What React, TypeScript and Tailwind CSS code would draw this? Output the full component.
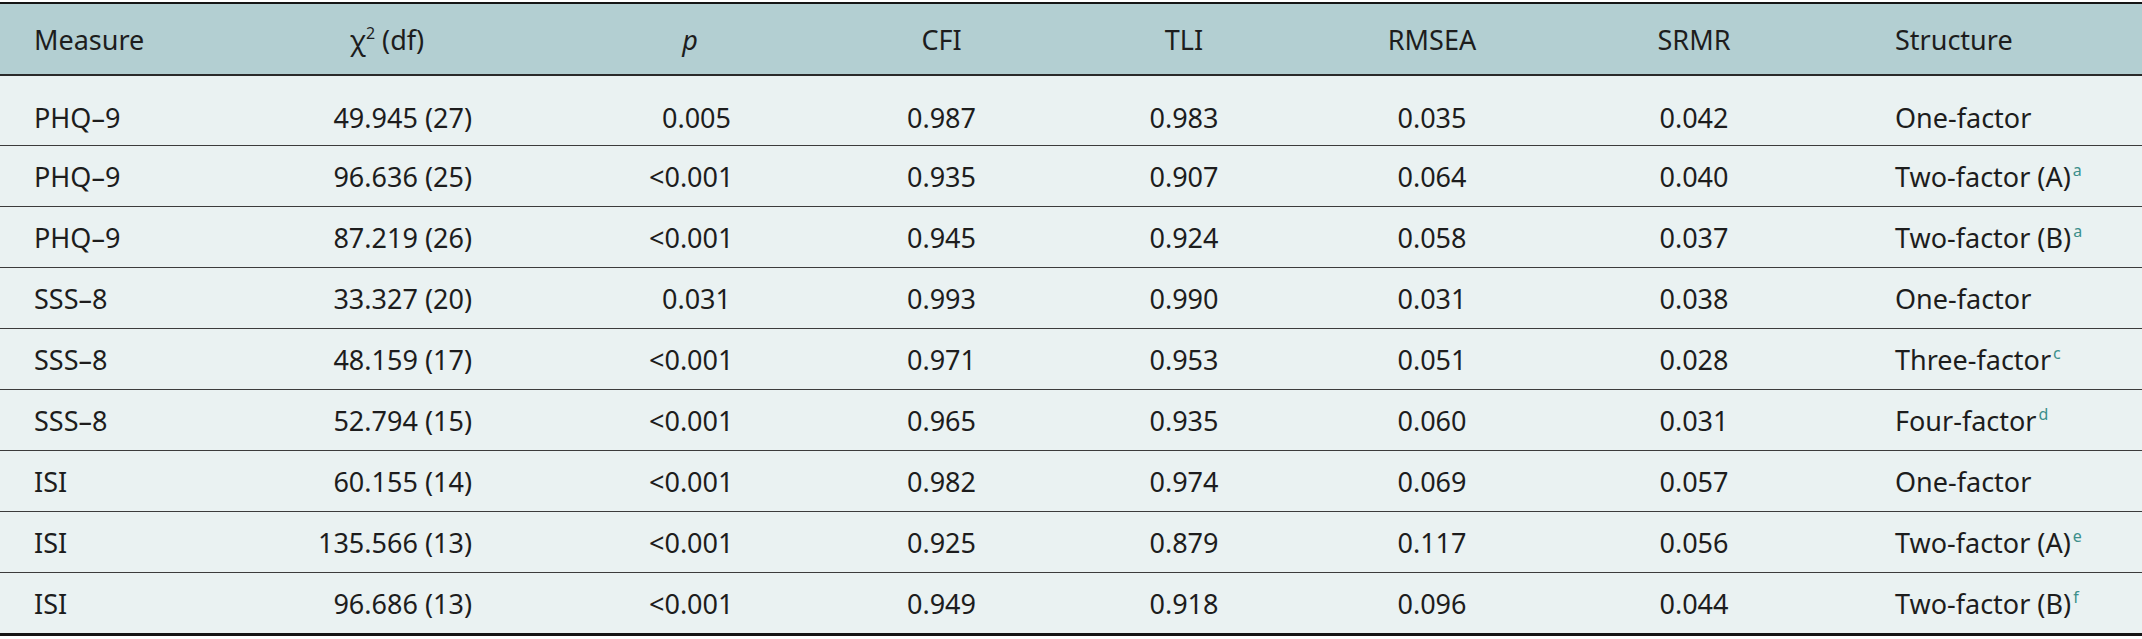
import React from "react"

type Row = {
  measure: string
  chi: string
  p: string
  cfi: string
  tli: string
  rmsea: string
  srmr: string
  structure: string
  note?: string
}

const rows: Row[] = [
  { measure: "PHQ–9", chi: "49.945 (27)", p: "0.005", cfi: "0.987", tli: "0.983", rmsea: "0.035", srmr: "0.042", structure: "One-factor" },
  { measure: "PHQ–9", chi: "96.636 (25)", p: "<0.001", cfi: "0.935", tli: "0.907", rmsea: "0.064", srmr: "0.040", structure: "Two-factor (A)", note: "a" },
  { measure: "PHQ–9", chi: "87.219 (26)", p: "<0.001", cfi: "0.945", tli: "0.924", rmsea: "0.058", srmr: "0.037", structure: "Two-factor (B)", note: "a" },
  { measure: "SSS–8", chi: "33.327 (20)", p: "0.031", cfi: "0.993", tli: "0.990", rmsea: "0.031", srmr: "0.038", structure: "One-factor" },
  { measure: "SSS–8", chi: "48.159 (17)", p: "<0.001", cfi: "0.971", tli: "0.953", rmsea: "0.051", srmr: "0.028", structure: "Three-factor", note: "c" },
  { measure: "SSS–8", chi: "52.794 (15)", p: "<0.001", cfi: "0.965", tli: "0.935", rmsea: "0.060", srmr: "0.031", structure: "Four-factor", note: "d" },
  { measure: "ISI", chi: "60.155 (14)", p: "<0.001", cfi: "0.982", tli: "0.974", rmsea: "0.069", srmr: "0.057", structure: "One-factor" },
  { measure: "ISI", chi: "135.566 (13)", p: "<0.001", cfi: "0.925", tli: "0.879", rmsea: "0.117", srmr: "0.056", structure: "Two-factor (A)", note: "e" },
  { measure: "ISI", chi: "96.686 (13)", p: "<0.001", cfi: "0.949", tli: "0.918", rmsea: "0.096", srmr: "0.044", structure: "Two-factor (B)", note: "f" },
]

// column centres follow the reference; numbers are right aligned inside a centred block
const grid = "grid grid-cols-[236px_302px_304px_199px_286px_210px_314px_1fr] items-center"

export default function App() {
  return (
    <div className="w-[2142px] h-[639px] bg-white pt-[2px] font-['Noto_Sans',sans-serif] text-[27px] leading-none text-[#1d1d1d]">
      <div className="border-t-2 border-b-[3px] border-[#151515]">
        {/* header */}
        <div className={`${grid} h-[72px] bg-[#b3cfd2] border-b-2 border-[#2a2a2a]`}>
          <div className="pl-[34px]">Measure</div>
          <div className="text-center">
            χ<span className="relative -top-[11px] text-[16px]">2</span> (df)
          </div>
          <div className="text-center italic">p</div>
          <div className="text-center">CFI</div>
          <div className="text-center">TLI</div>
          <div className="text-center">RMSEA</div>
          <div className="text-center">SRMR</div>
          <div className="pl-[44px]">Structure</div>
        </div>

        {/* body */}
        <div className="bg-[#eaf2f2]">
          {rows.map((r, i) => (
            <div
              key={i}
              className={`${grid} ${i === 0 ? "h-[70px] pt-[14px]" : i === rows.length - 1 ? "h-[60px]" : "h-[61px]"} ${
                i < rows.length - 1 ? "border-b border-[#3c3c3c]" : ""
              }`}
            >
              <div className="pl-[34px]">{r.measure}</div>
              <div className="flex justify-center">
                <div className="w-[170px] text-right">{r.chi}</div>
              </div>
              <div className="flex justify-center">
                <div className="w-[82px] text-right">{r.p}</div>
              </div>
              <div className="text-center">{r.cfi}</div>
              <div className="text-center">{r.tli}</div>
              <div className="text-center">{r.rmsea}</div>
              <div className="text-center">{r.srmr}</div>
              <div className="pl-[44px]">
                {r.structure}
                {r.note && (
                  <span className="relative -top-[11px] ml-[2px] text-[16px] text-[#3c8f8b]">{r.note}</span>
                )}
              </div>
            </div>
          ))}
        </div>
      </div>
    </div>
  )
}
